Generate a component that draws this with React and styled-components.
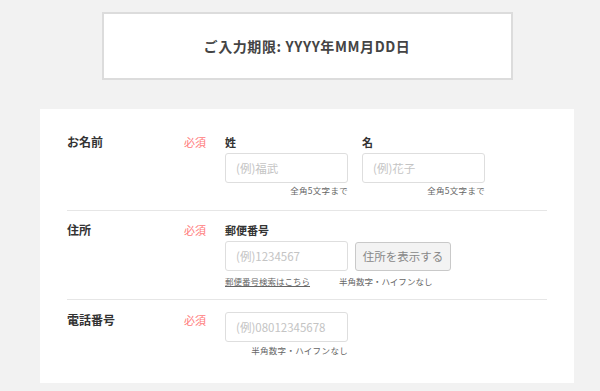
import React from 'react';
import styled, { createGlobalStyle } from 'styled-components';

const GlobalStyle = createGlobalStyle`
  html, body {
    margin: 0;
    padding: 0;
    background: #f2f2f2;
    font-family: "Noto Sans CJK JP", "Noto Sans", sans-serif;
    color: #333;
  }
`;

const Page = styled.div`
  width: 534px;
  padding: 12px 0 0 40px;
`;

const DeadlineBox = styled.div`
  width: 411px;
  height: 68px;
  box-sizing: border-box;
  margin: 0 auto;
  background: #fff;
  border: 2px solid #dcdcdc;
  display: flex;
  align-items: center;
  justify-content: center;
  font-size: 14px;
  font-weight: bold;
  letter-spacing: 0.6px;
  color: #444;
`;

const Card = styled.div`
  margin-top: 29px;
  background: #fff;
  padding: 14px 27px 15px;
`;

const Row = styled.div`
  display: grid;
  grid-template-columns: 117px 41px 1fr;
  padding: 12px 0 ${(p) => p.$pb || 15}px;
  border-bottom: ${(p) => (p.$last ? 'none' : '1px solid #e6e6e6')};
`;

const Label = styled.div`
  font-size: 12px;
  font-weight: bold;
  line-height: 14px;
  color: #333;
  margin-top: ${(p) => p.$mt || 0}px;
`;

const Required = styled.div`
  font-size: 11px;
  line-height: 14px;
  color: #ff7a7a;
  margin-top: ${(p) => p.$mt || 0}px;
`;

const Fields = styled.div`
  display: flex;
  gap: ${(p) => p.$gap || 14}px;
`;

const Field = styled.div`
  display: flex;
  flex-direction: column;
  width: 123px;
`;

const FieldLabel = styled.div`
  font-size: 11px;
  font-weight: bold;
  line-height: 14px;
  color: #333;
  margin-bottom: 4px;
`;

const Input = styled.input`
  box-sizing: border-box;
  width: 123px;
  height: 30px;
  border: 1px solid #dedede;
  border-radius: 3px;
  padding: 0 10px;
  font-family: inherit;
  font-size: 11.5px;
  color: #333;
  outline: none;
  &::placeholder {
    color: #c4c4c4;
  }
`;

const Hint = styled.div`
  margin-top: ${(p) => p.$mt || 2}px;
  font-size: 8.5px;
  line-height: 10px;
  letter-spacing: 0.3px;
  color: #666;
  text-align: ${(p) => p.$align || 'right'};
  white-space: nowrap;
`;

const InlineGroup = styled.div`
  display: flex;
  gap: 7px;
  align-items: center;
`;

const Button = styled.button`
  box-sizing: border-box;
  width: 96px;
  height: 29px;
  padding: 0;
  white-space: nowrap;
  background: #f3f3f3;
  border: 1px solid #c9c9c9;
  border-radius: 3px;
  font-family: inherit;
  font-size: 11.5px;
  color: #888;
  cursor: pointer;
`;

const HelpLine = styled.div`
  display: flex;
  gap: 29px;
  margin-top: 5px;
  font-size: 8.5px;
  line-height: 10px;
  color: #666;
  white-space: nowrap;
`;

const SearchLink = styled.a`
  color: #666;
  text-decoration: underline;
  cursor: pointer;
`;

export default function App() {
  return (
    <>
      <GlobalStyle />
      <Page>
        <DeadlineBox>ご入力期限: YYYY年MM月DD日</DeadlineBox>
        <Card>
          <Row>
            <Label>お名前</Label>
            <Required>必須</Required>
            <Fields>
              <Field>
                <FieldLabel>姓</FieldLabel>
                <Input placeholder="(例)福武" />
                <Hint>全角5文字まで</Hint>
              </Field>
              <Field>
                <FieldLabel>名</FieldLabel>
                <Input placeholder="(例)花子" />
                <Hint>全角5文字まで</Hint>
              </Field>
            </Fields>
          </Row>
          <Row $pb={13}>
            <Label>住所</Label>
            <Required>必須</Required>
            <div>
              <FieldLabel>郵便番号</FieldLabel>
              <InlineGroup>
                <Input placeholder="(例)1234567" />
                <Button>住所を表示する</Button>
              </InlineGroup>
              <HelpLine>
                <SearchLink>郵便番号検索はこちら</SearchLink>
                <span>半角数字・ハイフンなし</span>
              </HelpLine>
            </div>
          </Row>
          <Row $last $pb={13}>
            <Label $mt={1}>電話番号</Label>
            <Required $mt={1}>必須</Required>
            <Field>
              <Input placeholder="(例)08012345678" />
              <Hint $mt={3}>半角数字・ハイフンなし</Hint>
            </Field>
          </Row>
        </Card>
      </Page>
    </>
  );
}
